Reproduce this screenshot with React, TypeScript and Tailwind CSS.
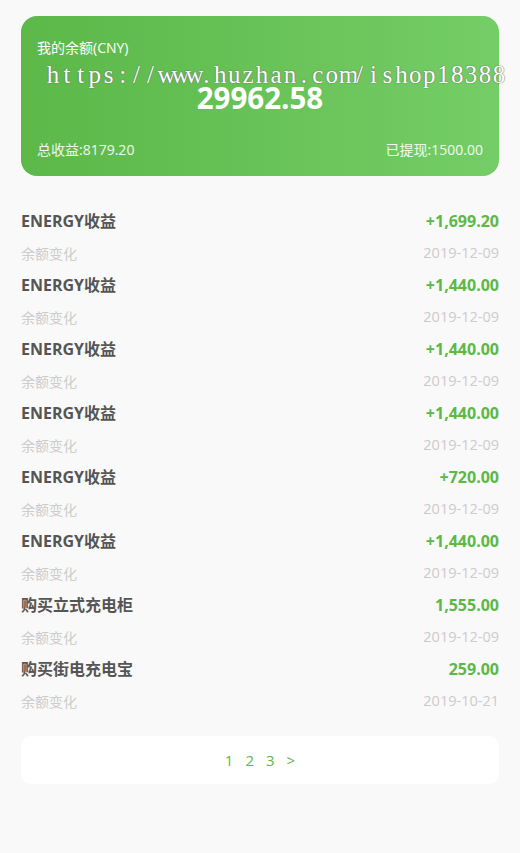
import React from 'react';

const records = [
  { title: 'ENERGY收益', amount: '+1,699.20', date: '2019-12-09' },
  { title: 'ENERGY收益', amount: '+1,440.00', date: '2019-12-09' },
  { title: 'ENERGY收益', amount: '+1,440.00', date: '2019-12-09' },
  { title: 'ENERGY收益', amount: '+1,440.00', date: '2019-12-09' },
  { title: 'ENERGY收益', amount: '+720.00', date: '2019-12-09' },
  { title: 'ENERGY收益', amount: '+1,440.00', date: '2019-12-09' },
  { title: '购买立式充电柜', amount: '1,555.00', date: '2019-12-09' },
  { title: '购买街电充电宝', amount: '259.00', date: '2019-10-21' },
];

const watermark = 'https://www.huzhan.com/ishop18388';

export default function App() {
  return (
    <div
      className="min-h-[853px] w-[520px] bg-[#f9f9f9] px-[21px] pt-[16px]"
      style={{ fontFamily: '"Open Sans", "Noto Sans CJK SC", sans-serif' }}
    >
      {/* Balance card */}
      <div className="relative h-[160px] rounded-[16px] bg-gradient-to-r from-[#5cb848] to-[#74cd66] px-[16px] text-white">
        <div className="pt-[22px] text-[14px] leading-[20px]">我的余额(CNY)</div>
        <div className="mt-[20px] text-center text-[29.5px] font-bold leading-[40px]">29962.58</div>
        <div className="mt-[22px] flex justify-between text-[14px] leading-[20px] text-white/90">
          <span>总收益:8179.20</span>
          <span>已提现:1500.00</span>
        </div>
        {/* watermark overlay */}
        <div
          className="pointer-events-none absolute left-[25px] top-[44px] flex whitespace-nowrap text-[25px] leading-[30px] text-white"
          style={{ fontFamily: '"Liberation Serif", serif', textShadow: '0 0 1px #666, 0 0 1px #666' }}
        >
          {watermark.split('').map((c, i) => (
            <span key={i} className="inline-block w-[13.95px] text-center">
              {c}
            </span>
          ))}
        </div>
      </div>

      {/* Records */}
      <div className="mt-[29px]">
        {records.map((r, i) => (
          <div key={i}>
            <div className="flex h-[32px] items-center justify-between text-[16px] font-bold">
              <span className="text-[#555]">{r.title}</span>
              <span className="text-[#5cb848]">{r.amount}</span>
            </div>
            <div className="flex h-[32px] items-center justify-between text-[14px] text-[#cccccc]">
              <span>余额变化</span>
              <span className="text-[14.5px]">{r.date}</span>
            </div>
          </div>
        ))}
      </div>

      {/* Pagination */}
      <div className="mt-[19px] flex h-[48px] items-center justify-center gap-[12px] rounded-[10px] bg-white text-[15px] text-[#5cb848]">
        <span>1</span>
        <span>2</span>
        <span>3</span>
        <span>&gt;</span>
      </div>
    </div>
  );
}
